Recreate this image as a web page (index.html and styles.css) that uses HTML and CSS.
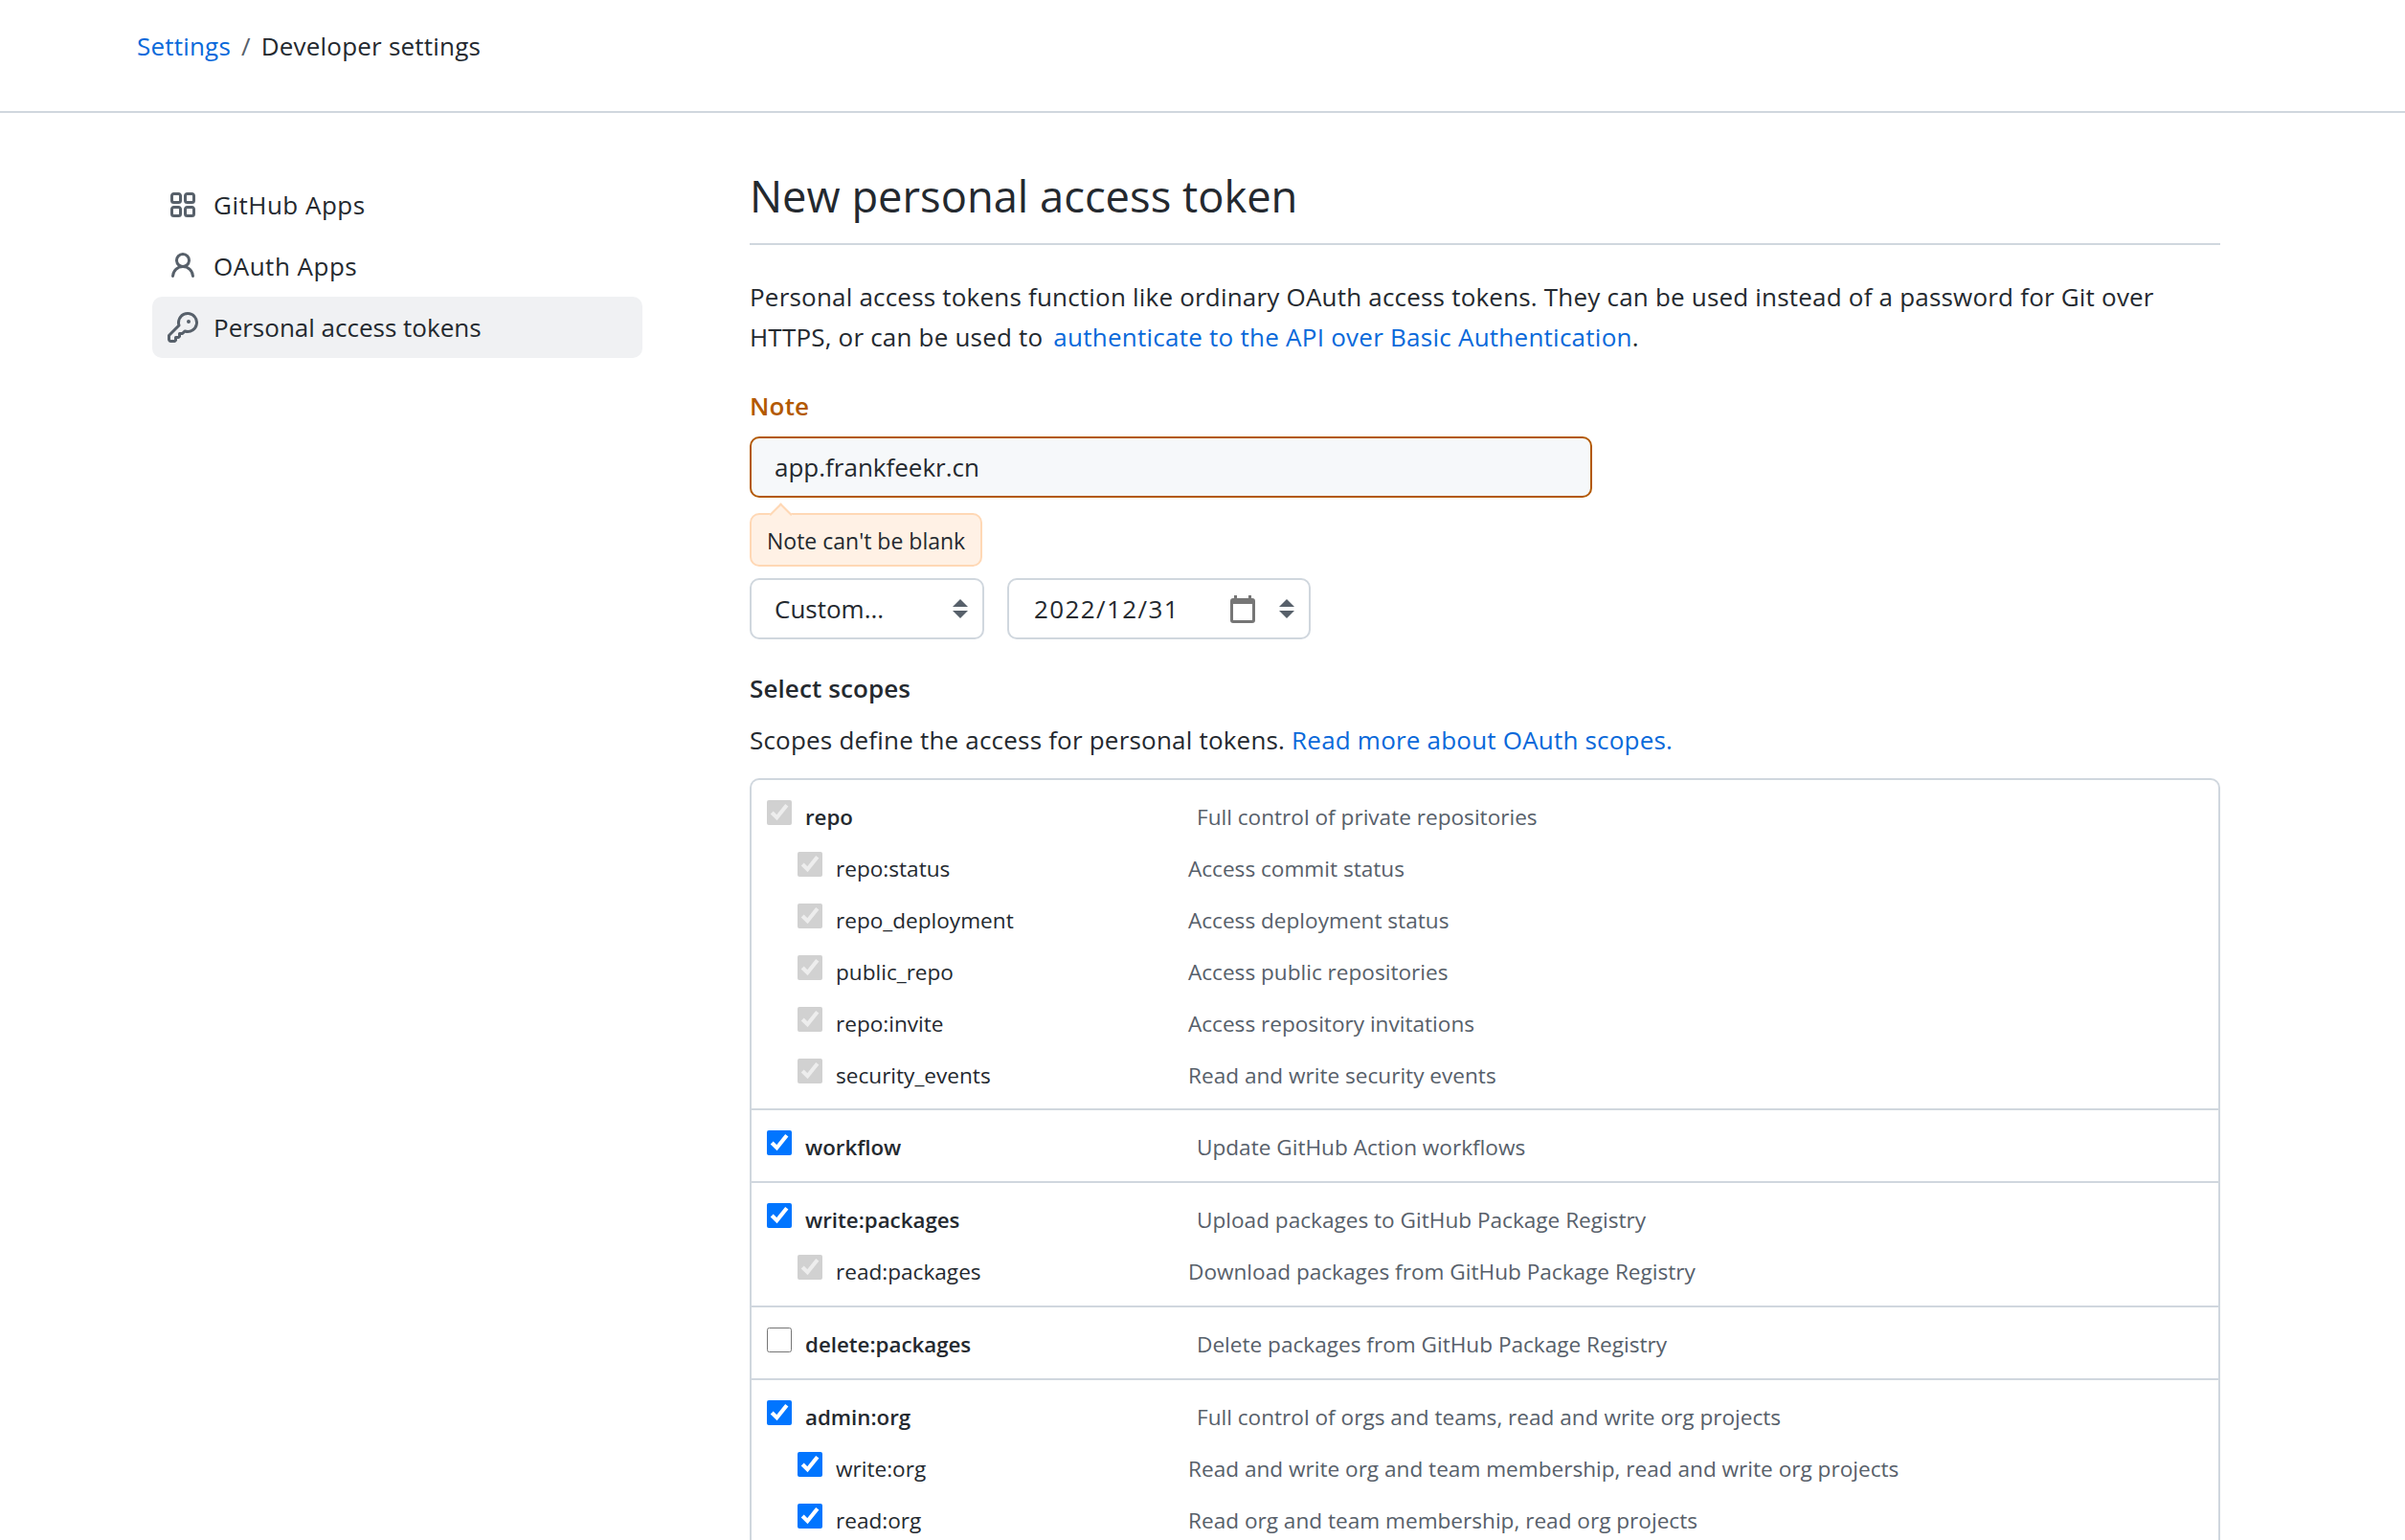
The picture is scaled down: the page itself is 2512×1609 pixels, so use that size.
FILE: index.html
```html
<!DOCTYPE html>
<html lang="en">
<head>
<meta charset="utf-8">
<title>New personal access token</title>
<link rel="stylesheet" href="styles.css">
</head>
<body>
<header class="topbar">
  <a class="link" href="#">Settings</a><span class="sep">/</span><span>Developer settings</span>
</header>
<div class="layout">
  <nav class="side">
    <a class="side-item wide" href="#"><svg class="side-icon" viewBox="0 0 16 16"><path fill-rule="evenodd" d="M1.5 3.25c0-.966.784-1.75 1.75-1.75h2.5c.966 0 1.75.784 1.75 1.75v2.5A1.75 1.75 0 015.75 7.5h-2.5A1.75 1.75 0 011.5 5.75v-2.5zM3.25 3a.25.25 0 00-.25.25v2.5c0 .138.112.25.25.25h2.5A.25.25 0 006 5.75v-2.5A.25.25 0 005.75 3h-2.5zM1.5 10.25c0-.966.784-1.75 1.75-1.75h2.5c.966 0 1.75.784 1.75 1.75v2.5a1.75 1.75 0 01-1.75 1.75h-2.5a1.75 1.75 0 01-1.75-1.75v-2.5zM3.25 10a.25.25 0 00-.25.25v2.5c0 .138.112.25.25.25h2.5a.25.25 0 00.25-.25v-2.5a.25.25 0 00-.25-.25h-2.5zM8.5 3.25c0-.966.784-1.75 1.75-1.75h2.5c.966 0 1.75.784 1.75 1.75v2.5a1.75 1.75 0 01-1.75 1.75h-2.5A1.75 1.75 0 018.5 5.75v-2.5zM10.25 3a.25.25 0 00-.25.25v2.5c0 .138.112.25.25.25h2.5a.25.25 0 00.25-.25v-2.5a.25.25 0 00-.25-.25h-2.5zM8.5 10.25c0-.966.784-1.75 1.75-1.75h2.5c.966 0 1.75.784 1.75 1.75v2.5a1.75 1.75 0 01-1.75 1.75h-2.5a1.75 1.75 0 01-1.75-1.75v-2.5zM10.25 10a.25.25 0 00-.25.25v2.5c0 .138.112.25.25.25h2.5a.25.25 0 00.25-.25v-2.5a.25.25 0 00-.25-.25h-2.5z"/></svg>GitHub Apps</a>
    <a class="side-item wide" href="#"><svg class="side-icon" viewBox="0 0 16 16"><path fill-rule="evenodd" d="M10.5 5a2.5 2.5 0 11-5 0 2.5 2.5 0 015 0zm.061 3.073a4 4 0 10-5.123 0 6.004 6.004 0 00-3.431 5.142.75.75 0 001.498.07 4.5 4.5 0 018.99 0 .75.75 0 101.498-.07 6.005 6.005 0 00-3.432-5.142z"/></svg>OAuth Apps</a>
    <a class="side-item active" href="#"><svg class="side-icon" viewBox="0 0 16 16"><path fill-rule="evenodd" d="M6.5 5.5a4 4 0 112.731 3.795.75.75 0 00-.768.18L7.44 10.5H6.25a.75.75 0 00-.75.75v1.19l-.06.06H4.25a.75.75 0 00-.75.75v1.19l-.06.06H1.75a.25.25 0 01-.25-.25v-1.69l5.024-5.023a.75.75 0 00.181-.768A3.995 3.995 0 016.5 5.5zm4-5.5a5.5 5.5 0 00-5.348 6.788L.22 11.72a.75.75 0 00-.22.53v2C0 15.216.784 16 1.75 16h2a.75.75 0 00.53-.22l.5-.5a.75.75 0 00.22-.53V14h.75a.75.75 0 00.53-.22l.5-.5a.75.75 0 00.22-.53V12h.75a.75.75 0 00.53-.22l.932-.932A5.5 5.5 0 1010.5 0zm.5 6a1 1 0 100-2 1 1 0 000 2z"/></svg>Personal access tokens</a>
  </nav>
  <main class="main">
    <h1 class="title">New personal access token</h1>
    <p class="intro">Personal access tokens function like ordinary OAuth access tokens. They can be used instead of a password for Git over<br>HTTPS, or can be used to <a class="link" href="#">authenticate to the API over Basic Authentication</a>.</p>
    <label class="note-label" for="note">Note</label>
    <input class="note-input" id="note" type="text" value="app.frankfeekr.cn">
    <div class="note-error">Note can't be blank</div>
    <div class="expiry">
      <div class="field field-select">
        <span>Custom...</span>
        <svg class="updown" viewBox="0 0 16 20"><path d="M8 0l8 8H0zM0 12h16l-8 8z"/></svg>
      </div>
      <div class="field field-date">
        <span class="date-value">2022/12/31</span>
        <svg class="calendar" viewBox="0 0 26 29"><path fill-rule="evenodd" d="M4 0h3v3h12V0h3v3h1a3 3 0 013 3v20a3 3 0 01-3 3H3a3 3 0 01-3-3V6a3 3 0 013-3h1zM3 9v17h20V9z"/></svg>
        <svg class="updown" viewBox="0 0 16 20"><path d="M8 0l8 8H0zM0 12h16l-8 8z"/></svg>
      </div>
    </div>
    <h2 class="scopes-title">Select scopes</h2>
    <p class="scopes-intro">Scopes define the access for personal tokens. <a class="link" href="#">Read more about OAuth scopes.</a></p>
    <div class="scopes">
      <section class="group first">
        <div class="scope"><input type="checkbox" checked disabled><span class="name">repo</span><span class="desc">Full control of private repositories</span></div>
        <div class="scope sub"><input type="checkbox" checked disabled><span class="name">repo:status</span><span class="desc">Access commit status</span></div>
        <div class="scope sub"><input type="checkbox" checked disabled><span class="name">repo_deployment</span><span class="desc">Access deployment status</span></div>
        <div class="scope sub"><input type="checkbox" checked disabled><span class="name">public_repo</span><span class="desc">Access public repositories</span></div>
        <div class="scope sub"><input type="checkbox" checked disabled><span class="name">repo:invite</span><span class="desc">Access repository invitations</span></div>
        <div class="scope sub"><input type="checkbox" checked disabled><span class="name">security_events</span><span class="desc">Read and write security events</span></div>
      </section>
      <section class="group">
        <div class="scope"><input type="checkbox" checked><span class="name">workflow</span><span class="desc">Update GitHub Action workflows</span></div>
      </section>
      <section class="group">
        <div class="scope"><input type="checkbox" checked><span class="name">write:packages</span><span class="desc">Upload packages to GitHub Package Registry</span></div>
        <div class="scope sub"><input type="checkbox" checked disabled><span class="name">read:packages</span><span class="desc">Download packages from GitHub Package Registry</span></div>
      </section>
      <section class="group">
        <div class="scope"><input type="checkbox"><span class="name">delete:packages</span><span class="desc">Delete packages from GitHub Package Registry</span></div>
      </section>
      <section class="group">
        <div class="scope"><input type="checkbox" checked><span class="name">admin:org</span><span class="desc">Full control of orgs and teams, read and write org projects</span></div>
        <div class="scope sub"><input type="checkbox" checked><span class="name">write:org</span><span class="desc">Read and write org and team membership, read and write org projects</span></div>
        <div class="scope sub"><input type="checkbox" checked><span class="name">read:org</span><span class="desc">Read org and team membership, read org projects</span></div>
      </section>
    </div>
  </main>
</div>
</body>
</html>
```

FILE: styles.css
```css
* { box-sizing: border-box; }
html, body { margin: 0; height: 1609px; overflow: hidden; background: #fff; }
body { font-family: "Open Sans", "Noto Sans", sans-serif; font-size: 26px; letter-spacing: .2px; color: #24292f; }
a { text-decoration: none; color: inherit; }
.link { color: #0969da; }

.topbar { height: 118px; padding: 18px 0 0 143px; line-height: 60px; border-bottom: 2px solid #d0d7de; }
.sep { margin: 0 11px; color: #57606a; }

.layout { display: flex; padding: 64px 0 0 159px; }
.side { width: 512px; flex: none; }
.side-item { display: flex; align-items: center; gap: 16px; height: 64px; padding-left: 16px; border-radius: 10px; letter-spacing: 0; }
.side-item.wide { letter-spacing: .5px; }
.side-item.active { background: #f0f1f3; }
.side-icon { width: 32px; height: 32px; fill: #57606a; flex: none; }

.main { width: 1536px; margin-left: 112px; }
.title { margin: 0; height: 74px; font-size: 45.3px; font-weight: 400; line-height: 46px; letter-spacing: 0; border-bottom: 2px solid #d0d7de; }
.intro { margin: 33px 0 0; line-height: 42px; }
.intro .link { margin-left: 4px; letter-spacing: .25px; }
.note-label { display: block; margin-top: 31px; line-height: 40px; font-weight: 600; letter-spacing: .2px; color: #b35900; }
.note-input { display: block; width: 880px; height: 64px; margin-top: 12px; padding: 0 24px; border: 2px solid #b35900; border-radius: 10px; background: #f6f8fa; font: inherit; letter-spacing: 0; color: #24292f; }
.note-error { position: relative; width: 243px; height: 56px; margin-top: 16px; padding-left: 16px; line-height: 54px; font-size: 23px; letter-spacing: 0; background: #fff1e5; border: 2px solid #ffd8b5; border-radius: 10px; }
.note-error::before { content: ""; position: absolute; left: 22px; top: -9px; width: 15px; height: 15px; background: #fff1e5; border: 2px solid #ffd8b5; border-right: 0; border-bottom: 0; transform: rotate(45deg); }

.expiry { display: flex; gap: 24px; margin-top: 12px; letter-spacing: 0; }
.field { display: flex; align-items: center; height: 64px; border: 2px solid #d0d7de; border-radius: 10px; }
.field-select { width: 245px; padding: 0 15px 0 24px; justify-content: space-between; }
.field-date { width: 317px; padding: 0 15px 0 26px; }
.date-value { flex: 1; letter-spacing: 1.4px; }
.calendar { width: 26px; height: 29px; fill: #767676; margin-right: 25px; }
.updown { width: 16px; height: 20px; fill: #57606a; }

.scopes-title { margin: 31px 0 0; font-size: 26px; font-weight: 600; line-height: 40px; letter-spacing: .1px; }
.scopes-intro { margin: 13px 0 0; line-height: 42px; }

.scopes { margin-top: 19px; border: 2px solid #d0d7de; border-bottom: 0; border-radius: 10px 10px 0 0; }
.group { position: relative; padding: 11px 0 9px 18px; border-top: 2px solid #d0d7de; margin-left: -2px; }
.group.first { padding: 11px 0 8px 18px; border-top: 0; }
.scope { display: flex; height: 54px; align-items: center; font-size: 22.6px; letter-spacing: 0; color: #24292f; }
.scope input { flex: none; width: 26px; height: 26px; margin: -9px 14px 0 0; }
.name { width: 409px; font-weight: 600; font-size: 22.3px; }
.desc { color: #57606a; }
.sub { padding-left: 32px; }
.sub .name { width: 368px; font-weight: 400; font-size: 22.6px; }
```
